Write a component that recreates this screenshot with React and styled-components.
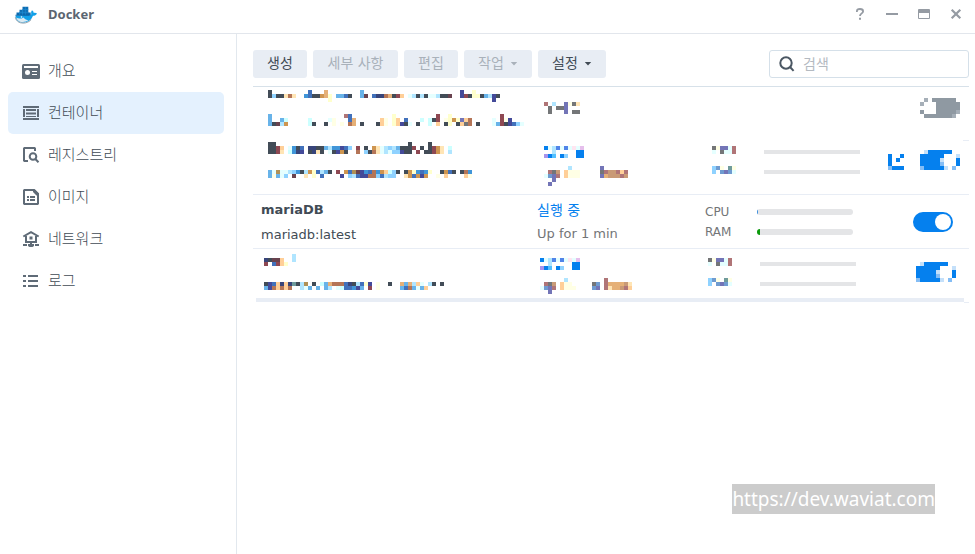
import React from "react";
import styled, { createGlobalStyle } from "styled-components";

const App = () => {
  return (
    <Window>
      <GlobalStyle />
      <TitleBar>
        <WhaleIcon />
        <Title>Docker</Title>
        <WindowButton aria-label="도움말">
          <svg width="12" height="12" viewBox="0 0 12 12">
            <path d="M2.9 4V3.3C2.9 1.7 4.2 1 6 1s3.1.8 3.1 2.4C9.1 5.4 6 5.4 6 8" fill="none" stroke="#959ba3" strokeWidth="1.8" />
            <path d="M5 9.7h2v2H5z" fill="#959ba3" />
          </svg>
        </WindowButton>
        <WindowButton aria-label="최소화">
          <svg width="12" height="12" viewBox="0 0 12 12">
            <path d="M0 5h12v2H0z" fill="#959ba3" />
          </svg>
        </WindowButton>
        <WindowButton aria-label="최대화">
          <svg width="12" height="12" viewBox="0 0 12 12">
            <path d="M1 1h10q1 0 1 1v8q0 1-1 1H1q-1 0-1-1V2q0-1 1-1zM1 5v5h10V5z" fill="#959ba3" fillRule="evenodd" />
          </svg>
        </WindowButton>
        <WindowButton aria-label="닫기">
          <svg width="12" height="12" viewBox="0 0 12 12">
            <path d="M1.7 1.7l8.6 8.6M10.3 1.7l-8.6 8.6" stroke="#959ba3" strokeWidth="2.2" />
          </svg>
        </WindowButton>
      </TitleBar>

      <Body>
        <Sidebar>
          {menu.map((item) => (
            <MenuItem key={item.label} href="#" $active={item.active}>
              <MenuIcon viewBox="0 0 18 18">{item.icon}</MenuIcon>
              <MenuLabel>{item.label}</MenuLabel>
            </MenuItem>
          ))}
        </Sidebar>

        <Main>
          <Toolbar>
            <ToolButton $width={54}>생성</ToolButton>
            <ToolButton $width={85} disabled>
              세부 사항
            </ToolButton>
            <ToolButton $width={54} disabled>
              편집
            </ToolButton>
            <ToolButton $width={68} disabled>
              작업
              <Caret />
            </ToolButton>
            <ToolButton $width={68}>
              설정
              <Caret />
            </ToolButton>
            <SearchBox>
              <svg width="16" height="16" viewBox="0 0 16 16" fill="none" stroke="#4b5763" strokeWidth="2">
                <circle cx="7" cy="7" r="5.7" />
                <path d="M11 11l3.6 3.9" />
              </svg>
              <SearchInput type="search" placeholder="검색" aria-label="검색" />
            </SearchBox>
          </Toolbar>

          <Table>
            <colgroup>
              <col />
              <Col $width={168} />
              <Col $width={52} />
              <Col $width={124} />
              <Col $width={32} />
              <Col $width={64} />
            </colgroup>
            <tbody>
              <MaskedRow cells={first} shift={7} top={3} height={54} tail />
              <MaskedRow cells={second} shift={7} top={1} height={54} line />
              <Row $height={54}>
                <Cell $line>
                  <Name>mariaDB</Name>
                  <ImageName>mariadb:latest</ImageName>
                </Cell>
                <Cell $line>
                  <Status>실행 중</Status>
                  <Uptime>Up for 1 min</Uptime>
                </Cell>
                <Cell $line>
                  <Resource>CPU</Resource>
                  <Resource>RAM</Resource>
                </Cell>
                <Cell $line>
                  <Meter value={1} color="#3b8ede" />
                  <Meter value={3} color="#0b9b0b" />
                </Cell>
                <Cell $line />
                <Cell $line>
                  <Switch type="checkbox" defaultChecked aria-label="mariaDB" />
                </Cell>
              </Row>
              <MaskedRow cells={last} shift={3} top={1} height={49} />
            </tbody>
          </Table>
          <TableEnd>
            <EndStrip />
            <EndLine />
          </TableEnd>
        </Main>
      </Body>

      <Watermark>https://dev.waviat.com</Watermark>
    </Window>
  );
};

export default App;

const WhaleIcon = () => (
  <svg width="24" height="20" viewBox="0 0 24 20">
    <path d="M1.5 11.5C1.5 16 4.500 18.600 9 18.600c5 0 8.200-2.300 10-6.800 1.800 0 3.200-.7 4-2.300-1-.8-2.200-.9-3.200-.6-.2-1.100-.8-2-1.800-2.600-1 1.300-1.100 2.500-.6 3.900-.6.5-1.400.6-2.200.6z" fill="#12a0e8" />
    <path d="M2 13.600c2.800 1.500 5.500 1.200 7.600-.2 1.300 1.800 2.900 2.500 5 2.700-2.700 2.400-8.300 3-11.100-.2z" fill="#dceaf2" />
    <path d="M1.300 13.200c.7 3.900 3.700 5.900 7.700 5.900 3.500 0 6.300-1.200 8.200-3.600" fill="none" stroke="#8899a5" strokeWidth=".9" />
    <path d="M2.500 8.500h3V5.700h3V2.800h5.800v5.700h2.400v2.700H2.500z" fill="#0e6db2" />
    <path d="M5.500 8.300h9M8.500 5.600h5.800M8.500 5.600V11M11.400 3v8M5.500 8v3" stroke="#1b8bd2" strokeWidth=".7" />
    <path d="M1.500 11.200h14" stroke="#07589a" strokeWidth=".8" />
    <circle cx="7.500" cy="13" r=".8" fill="#fff" />
  </svg>
);

const Caret = () => (
  <svg width="8" height="4" viewBox="0 0 8 4">
    <path d="M.8 0h6.400L4 3.600z" fill="currentColor" />
  </svg>
);

const Meter = ({ value, color }) => (
  <MeterLine>
    <Track>
      <Fill style={{ width: `${value}%`, background: color }} />
    </Track>
  </MeterLine>
);

const MaskedRow = ({ cells, shift, top, height, line, tail }) => (
  <Row $height={height}>
    {cells.map((rows, i) => (
      <Cell key={i} $shift={shift} $top={top} $line={line} $tail={tail && i === cells.length - 1}>
        <Mosaic rows={rows} />
      </Cell>
    ))}
  </Row>
);

// one letter per 4px block, see `tones`
const Mosaic = ({ rows }) => {
  const width = Math.max(0, ...rows.map((row) => row.length)) * 4;
  const height = rows.length * 4;
  return (
    <MosaicSvg width={width} height={height} shapeRendering="crispEdges" aria-hidden="true">
      {rows.map((row, y) =>
        row.split("").map((tone, x) =>
          tones[tone] ? (
            <rect key={`${x}-${y}`} x={x * 4} y={y * 4} width="4" height="4" fill={tones[tone]} />
          ) : null
        )
      )}
    </MosaicSvg>
  );
};

const tones = {
  k: "#424c57",
  n: "#38457a",
  v: "#444a99",
  b: "#4171bb",
  B: "#4095d8",
  s: "#68b3e9",
  c: "#8fd2ff",
  l: "#b0e5ff",
  a: "#ccffff",
  w: "#e5ffff",
  i: "#ffffe5",
  y: "#ffffcc",
  p: "#ffe5b5",
  o: "#ffcf98",
  t: "#e5b077",
  g: "#ce9550",
  r: "#b47557",
  m: "#8e4852",
  u: "#69434f",
  x: "#af9157",
  q: "#b07577",
  d: "#747678",
  P: "#7375b7",
  D: "#6f9bd0",
  T: "#6f9b9b",
  C: "#c99a76",
  f: "#ffe5f0",
  L: "#e5bfec",
  M: "#a894ec",
  h: "#5184e8",
  S: "#52c0ff",
  Z: "#0580ee",
  z: "#84bdf5",
  Y: "#c4e0fa",
  G: "#8f99a2",
  H: "#a6afb8",
  E: "#e4e5e7",
};

const first = [
  [
    "k         b   t        s                        v  y",
    "kckkprp  Bbkkgty ssbk  su bnnrtkmo wlklkwwlkku  vmkyykslvk",
    "               y                                        v",
    "",
    "",
    "",
    "s                  qb          y          m  y            m",
    "s  sa     a    wi   bt      oi yo b   a akm iygyPor     w miv",
    "skulg     ak  k i i rt k   koi yovkw k  a o ky kodr k   wsmkvbcw",
    "",
    "",
    "",
  ],
  ["", "", "", "q l  Pidp", " d ddP", " d   P dd"],
  [],
  [],
  [],
  ["", "", " H GGGGGG", "H   GGGGGG", "    GGGGGG", "G   GGGGGH", " GGGGGGGH"],
];

const second = [
  [
    "kk                                 k    k",
    "kkmo wBkb nnkkslBBvbc m k gpwlclskkkm k kmgp a",
    "kkmp aBnv knpk wkvgk  r ckrpwlwccvkk m kkmgp l",
    "",
    "",
    "",
    "",
    "swxwwlcBklgyblsk m gbxuvBbrBgoack kgyBbBy  kgbk krB",
    "siswc u  p y b    v clbvvrrcblcc  pgbgvg  i o    oi",
  ],
  [
    "",
    "ZwlhwhwfwL",
    "  l     ZZ",
    "MZS Zc  ZZ",
    "",
    "",
    "      l       P",
    " qdC oiii     dqCCqoq",
    "wDPq oiii     PtCCCqC",
    "  P",
    " P",
  ],
  ["", "diPPwq", "w dwwq", "", "", "", "cDi Ti", "c DPDw"],
  ["", "", "E".repeat(24), "", "", "", "", "E".repeat(24)],
  ["", "", "", "Z  Z", "Z Z", "Z", "zZZZ"],
  ["", "", " YZZZZZZ", "ZZZZZZ   Y", "ZZZZZY   Z", "ZZZZZz   Z", "zZZZZZY z"],
];

const last = [
  [
    "",
    "       l",
    "nkuuo  l",
    "m bmoy",
    "",
    "",
    "",
    "",
    "kvbononTklx k astrrrbnklbyv i  k  tstlow lk k",
    "svroror  lws s sl wabbBvs m i     sbrswso",
    "",
    "",
  ],
  [
    "",
    "",
    "ZwlhwhwfwL",
    "  l     ZZ",
    "MZS Zc  ZZ",
    "",
    "",
    "      l         q",
    " qdC oii     dD qttttCp",
    "wDPq oiii    DP qpttCqo",
    "  P",
  ],
  ["", "", "diPPwq", "w dwwq", "", "", "", "cDi Ti", "c DPDw"],
  ["", "", "", "E".repeat(24), "", "", "", "", "E".repeat(24)],
  [],
  ["", "", "", " YZZZZZZ", "ZZZZZZ   Y", "ZZZZZY   Z", "ZZZZZz   Z", "zZZZZZY z"],
];

const menu = [
  {
    label: "개요",
    icon: (
      <>
        <rect y="2" width="18" height="15" rx="1.500" fill="#5f6b77" />
        <path d="M2 4h14v2H2zM10 9h5v1h-5zM10 12h5v1h-5z" fill="#fff" />
        <circle cx="5.500" cy="10.500" r="2.500" fill="#fff" />
      </>
    ),
  },
  {
    label: "컨테이너",
    active: true,
    icon: (
      <path d="M1 2h16v2H1zM1 14h16v2H1zM1 5h2v8H1zM15 5h2v8h-2zM4 5h10v2H4zM4 8.500h10v2H4zM4 12h10v1H4z" fill="#5f6b77" />
    ),
  },
  {
    label: "레지스트리",
    icon: (
      <g fill="none" stroke="#5f6b77" strokeWidth="2">
        <path d="M13 5V2.500L12.500 2H2.500L2 2.500v12l.5.5H6" />
        <circle cx="11" cy="10.500" r="3.300" />
        <path d="M13.300 13l3.200 3.200" />
      </g>
    ),
  },
  {
    label: "이미지",
    icon: (
      <>
        <path d="M2.500 2H12l4 4v9.500l-.5.5h-13l-.5-.5v-13z" fill="none" stroke="#5f6b77" strokeWidth="2" />
        <path d="M11 1.500h2l4 4v2h-2.500L11 4zM5 8h2v2H5zM8 8h5v2H8zM5 11h2v2H5zM8 11h5v2H8z" fill="#5f6b77" />
      </>
    ),
  },
  {
    label: "네트워크",
    icon: (
      <>
        <path d="M1.300 6.500L9 2.200l7.700 4.300M4 6v6h10V6" fill="none" stroke="#5f6b77" strokeWidth="2" />
        <path d="M7.500 6.500h3v3h-3zM8 12h2v2H8zM1 14h4v2H1zM13 14h4v2h-4zM6 14h6v2l-1.500 1h-3L6 16z" fill="#5f6b77" />
      </>
    ),
  },
  {
    label: "로그",
    icon: <path d="M1 3h3v2H1zM6 3h10v2H6zM1 8h3v2H1zM6 8h10v2H6zM1 13h3v2H1zM6 13h10v2H6z" fill="#5f6b77" />,
  },
];

const GlobalStyle = createGlobalStyle`
  * {
    box-sizing: border-box;
  }
  body {
    margin: 0;
    background: #fff;
    color: #414b55;
    font-family: "DejaVu Sans", "Noto Sans CJK KR", sans-serif;
    font-size: 13px;
  }
  button, input {
    font-family: inherit;
  }
`;

const Window = styled.div`
  position: relative;
  display: flex;
  flex-direction: column;
  min-height: 100vh;
`;

const TitleBar = styled.header`
  display: flex;
  align-items: center;
  height: 34px;
  padding: 0 3px 6px 14px;
  border-bottom: 1px solid #e2e6ec;
`;

const Title = styled.h1`
  flex: 1;
  margin: 0 0 0 10px;
  font: 700 13px/20px "Noto Sans", sans-serif;
  color: #5b6571;
`;

const WindowButton = styled.button`
  display: flex;
  align-items: center;
  justify-content: center;
  width: 32px;
  height: 24px;
  padding: 0;
  border: 0;
  background: none;
`;

const Body = styled.div`
  display: flex;
  flex: 1;
`;

const Sidebar = styled.nav`
  flex: none;
  width: 237px;
  padding: 16px 12px 16px 8px;
  border-right: 1px solid #e2e8ee;
`;

const MenuItem = styled.a`
  display: flex;
  align-items: center;
  gap: 8px;
  height: 42px;
  padding: 0 14px;
  border-radius: 5px;
  background: ${({ $active }) => ($active ? "#e4f1fe" : "transparent")};
  color: #414b55;
  font-family: "Noto Sans CJK KR", sans-serif;
  font-size: 15px;
  font-weight: 300;
  line-height: 20px;
  text-decoration: none;
`;

const MenuIcon = styled.svg`
  width: 18px;
  height: 18px;
`;

const MenuLabel = styled.span`
  padding-bottom: 2px;
`;

const Main = styled.main`
  flex: 1;
  min-width: 0;
  padding: 16px 6px 16px 16px;
`;

const Toolbar = styled.div`
  display: flex;
  gap: 6px;
  padding-bottom: 8px;
  border-bottom: 1px solid #d7e1e9;
`;

const ToolButton = styled.button`
  display: flex;
  align-items: center;
  justify-content: center;
  gap: 6px;
  min-width: ${({ $width }) => $width}px;
  height: 28px;
  padding: 0 12px 2px;
  border: 0;
  border-radius: 3px;
  background: #e8edf4;
  color: #414b55;
  font-size: 14px;
  line-height: 20px;

  svg {
    margin-top: 2px;
  }

  &:disabled {
    color: #a9b1ba;
  }
`;

const SearchBox = styled.label`
  display: flex;
  align-items: center;
  gap: 8px;
  width: 200px;
  height: 28px;
  margin-left: auto;
  padding: 0 8px 0 9px;
  border: 1px solid #d5e0e9;
  border-radius: 3px;
`;

const SearchInput = styled.input`
  flex: 1;
  min-width: 0;
  padding: 0 0 2px;
  border: 0;
  outline: 0;
  background: none;
  font-family: "Noto Sans CJK KR", sans-serif;
  font-size: 14px;
  line-height: 20px;

  &::placeholder {
    color: #b4bac1;
  }
`;

const Table = styled.table`
  width: 100%;
  table-layout: fixed;
  border-collapse: separate;
  border-spacing: 0;
`;

const Col = styled.col`
  width: ${({ $width }) => $width}px;
`;

const Row = styled.tr`
  height: ${({ $height }) => $height}px;
`;

const Cell = styled.td`
  padding: ${({ $top = 0 }) => $top}px 0 0 ${({ $shift = 0 }) => 8 + $shift}px;
  border-bottom: ${({ $line }) => ($line ? "1px solid #e8edf5" : "0")};
  vertical-align: ${({ $top }) => ($top ? "top" : "middle")};
  ${({ $tail }) =>
    $tail && "background: linear-gradient(#e8edf5, #e8edf5) right bottom / 6px 1px no-repeat;"}
`;

const MosaicSvg = styled.svg`
  display: block;
`;

const Name = styled.div`
  font-weight: 700;
  line-height: 25px;
`;

const ImageName = styled.div`
  line-height: 25px;
`;

const Status = styled.div`
  color: #0580ee;
  font-size: 14px;
  line-height: 23px;
`;

const Uptime = styled.div`
  color: #737577;
  line-height: 23px;
`;

const Resource = styled.div`
  color: #737577;
  font-size: 12px;
  line-height: 20px;
`;

const MeterLine = styled.div`
  display: flex;
  align-items: center;
  height: 20px;
`;

const Track = styled.div`
  width: 96px;
  height: 6px;
  overflow: hidden;
  border-radius: 3px;
  background: #e4e5e7;
`;

const Fill = styled.div`
  height: 100%;
`;

const Switch = styled.input`
  display: flex;
  align-items: center;
  width: 40px;
  height: 20px;
  margin: 0;
  padding: 2px;
  appearance: none;
  border-radius: 10px;
  background: #8f99a2;

  &::before {
    content: "";
    width: 16px;
    height: 16px;
    border-radius: 50%;
    background: #fff;
  }

  &:checked {
    justify-content: flex-end;
    background: #0580ee;
  }
`;

const TableEnd = styled.div`
  display: flex;
  height: 5px;
  padding-left: 3px;
`;

const EndStrip = styled.div`
  flex: 1;
  height: 4px;
  background: #e8edf5;
`;

const EndLine = styled.div`
  width: 5px;
  border-bottom: 1px solid #e8edf5;
`;

const Watermark = styled.div`
  position: absolute;
  right: 40px;
  bottom: 40px;
  background: #ccc;
  color: #fff;
  font: 19px/30px "Noto Sans", sans-serif;
`;
